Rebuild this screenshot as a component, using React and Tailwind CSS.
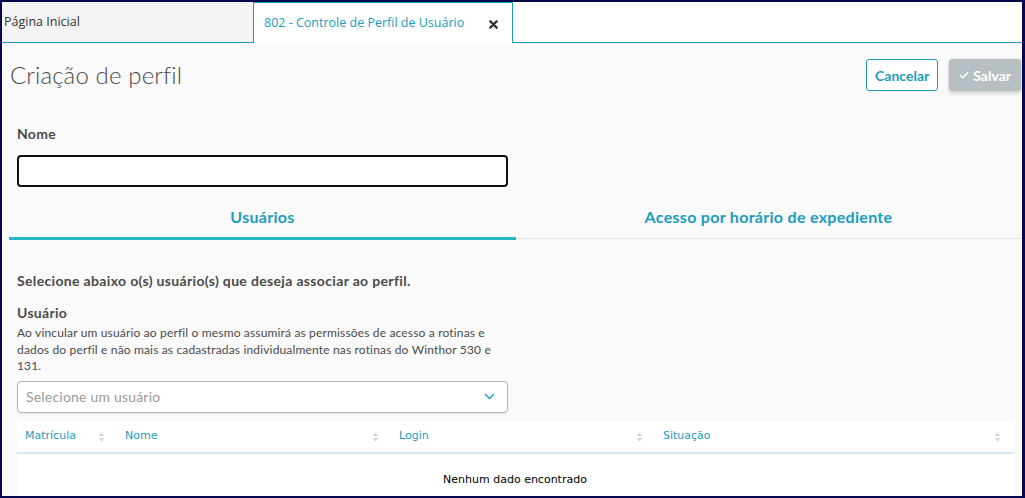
import React from "react";

const SortIcon = () => (
  <svg width="7" height="10" viewBox="0 0 7 10" className="shrink-0">
    <path d="M3.5 0.5 L6.5 4 H0.5 Z" fill="#d6d6d6" />
    <path d="M3.5 9.5 L6.5 6 H0.5 Z" fill="#d6d6d6" />
  </svg>
);

const columns = [
  { label: "Matrícula", width: "w-[100px]" },
  { label: "Nome", width: "w-[274px]" },
  { label: "Login", width: "w-[264px]" },
  { label: "Situação", width: "flex-1" },
];

export default function App() {
  return (
    <div className="w-[1025px] h-[498px] overflow-hidden border-2 border-r-[3px] border-[#07074f] bg-[#fafafa] flex flex-col font-['Lato',sans-serif] text-[#4a4a4a]">
      {/* tabs */}
      <div className="h-[41px] flex bg-white shrink-0">
        <div className="w-[251px] bg-[#f3f3f3] border-b border-[#1a9cc0] flex items-center pl-[2px] font-['Open_Sans',sans-serif] text-[12.5px] text-[#333]">
          Página Inicial
        </div>
        <div className="w-[260px] bg-white border border-b-0 border-[#1a9cc0] flex items-center pl-[10px] pr-[14px] font-['Open_Sans',sans-serif] text-[12.5px] text-[#1a9cc0]">
          <span className="flex-1">802 - Controle de Perfil de Usuário</span>
          <svg width="9" height="9" viewBox="0 0 10 10" className="mt-[3px]">
            <path d="M1.5 1.5 L8.5 8.5 M8.5 1.5 L1.5 8.5" stroke="#333" strokeWidth="2.6" strokeLinecap="round" />
          </svg>
        </div>
        <div className="flex-1 border-b border-[#1a9cc0]" />
      </div>

      {/* header */}
      <div className="flex items-center justify-between pl-[8px] pr-[1px] pt-[16px]">
        <h1 className="text-[24px] font-light tracking-[0.15px] text-[#4a4a4a] leading-none">Criação de perfil</h1>
        <div className="flex gap-[11px]">
          <button className="h-[32px] px-[8px] rounded-[3px] border border-[#1a9cc0] bg-white text-[#1a9cc0] font-bold text-[14px]">
            Cancelar
          </button>
          <button className="h-[32px] px-[10px] rounded-[3px] bg-[#b8bfc2] text-white font-bold text-[14px] shadow-[0_2px_4px_rgba(0,0,0,0.2)] flex items-center gap-[4px]">
            <svg width="10" height="8" viewBox="0 0 10 8">
              <path d="M1 4 L3.8 6.8 L9 1.2" stroke="white" strokeWidth="1.3" fill="none" />
            </svg>
            Salvar
          </button>
        </div>
      </div>

      {/* nome */}
      <div className="pl-[15px] pt-[34px] w-[506px]">
        <label className="block font-bold text-[14px] leading-[18px] tracking-[0.3px]">Nome</label>
        <div className="mt-[12px] h-[32px] rounded-[4px] border-2 border-[#111] bg-white" />
      </div>

      {/* sub tabs */}
      <div className="flex mt-[18px] ml-[7px]">
        <div className="w-[507px] h-[35px] flex justify-center items-start border-b-[3px] border-[#29b6c6] text-[#1a9cc0] font-bold text-[16px] tracking-[0.3px]">
          Usuários
        </div>
        <div className="flex-1 h-[34px] flex justify-center items-start border-b border-[#e4e4e4] text-[#1a9cc0] font-bold text-[16px] tracking-[0.3px] mr-[1px]">
          Acesso por horário de expediente
        </div>
      </div>

      {/* content */}
      <div className="pl-[15px] pr-[9px] pt-[32px] flex flex-col">
        <p className="font-bold text-[14px] leading-[18px] tracking-[0.34px]">Selecione abaixo o(s) usuário(s) que deseja associar ao perfil.</p>
        <p className="font-bold text-[14px] leading-[18px] tracking-[0.3px] mt-[14px]">Usuário</p>
        <p className="text-[12px] leading-[16.5px] tracking-[0.16px] w-[490px] mt-[3px]">
          Ao vincular um usuário ao perfil o mesmo assumirá as permissões de acesso a rotinas e dados do perfil e não mais as cadastradas individualmente nas rotinas do Winthor 530 e 131.
        </p>
        <div className="mt-[6px] w-[491px] h-[32px] rounded-[4px] border border-[#b5b5b5] bg-white flex items-center justify-between pl-[8px] pr-[12px] shadow-[0_1px_2px_rgba(0,0,0,0.08)]">
          <span className="text-[14px] tracking-[0.2px] text-[#9a9a9a]">Selecione um usuário</span>
          <svg width="11" height="7" viewBox="0 0 11 7">
            <path d="M1 1 L5.5 5.5 L10 1" stroke="#1a9cc0" strokeWidth="1.4" fill="none" />
          </svg>
        </div>

        {/* table */}
        <div className="mt-[9px] bg-white font-['DejaVu_Sans',sans-serif]">
          <div className="h-[32px] flex items-center border-b-2 border-[#d2eaf2]">
            {columns.map((c) => (
              <div key={c.label} className={`${c.width} flex items-center justify-between pl-[8px] pr-[12px] text-[11px] text-[#1a9cc0]`}>
                <span>{c.label}</span>
                <SortIcon />
              </div>
            ))}
          </div>
          <div className="h-[60px] flex justify-center pt-[18px] text-[11px] text-black">Nenhum dado encontrado</div>
        </div>
      </div>
    </div>
  );
}
